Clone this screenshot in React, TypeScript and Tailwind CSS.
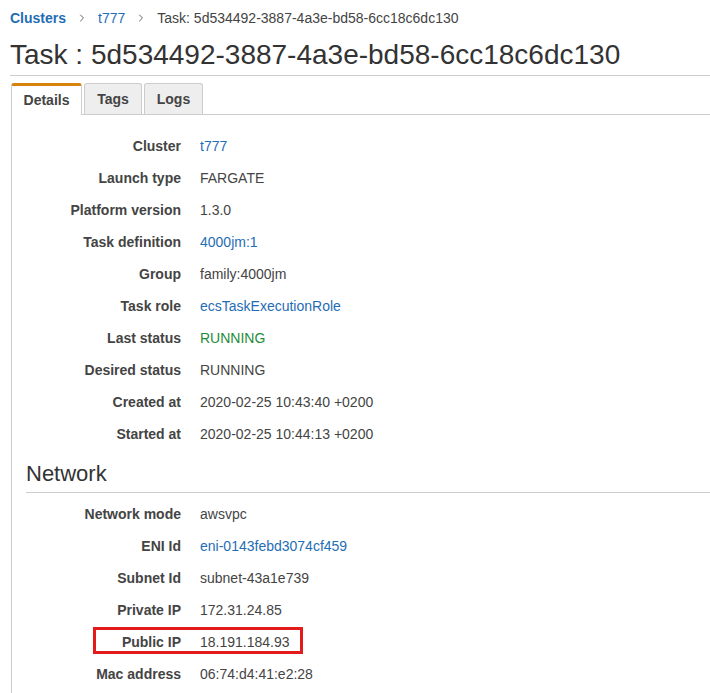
import { ChevronRight } from 'lucide-react'

type Row = {
  label: string
  value: string
  kind?: 'link' | 'ok'
  highlight?: boolean
}

const details: Row[] = [
  { label: 'Cluster', value: 't777', kind: 'link' },
  { label: 'Launch type', value: 'FARGATE' },
  { label: 'Platform version', value: '1.3.0' },
  { label: 'Task definition', value: '4000jm:1', kind: 'link' },
  { label: 'Group', value: 'family:4000jm' },
  { label: 'Task role', value: 'ecsTaskExecutionRole', kind: 'link' },
  { label: 'Last status', value: 'RUNNING', kind: 'ok' },
  { label: 'Desired status', value: 'RUNNING' },
  { label: 'Created at', value: '2020-02-25 10:43:40 +0200' },
  { label: 'Started at', value: '2020-02-25 10:44:13 +0200' },
]

const network: Row[] = [
  { label: 'Network mode', value: 'awsvpc' },
  { label: 'ENI Id', value: 'eni-0143febd3074cf459', kind: 'link' },
  { label: 'Subnet Id', value: 'subnet-43a1e739' },
  { label: 'Private IP', value: '172.31.24.85' },
  { label: 'Public IP', value: '18.191.184.93', highlight: true },
  { label: 'Mac address', value: '06:74:d4:41:e2:28' },
]

function DetailRow({ row }: { row: Row }) {
  const valueClass =
    row.kind === 'link'
      ? 'text-[#1f6db5]'
      : row.kind === 'ok'
        ? 'text-[#1d8d3a]'
        : 'text-[#444]'

  return (
    <div className="flex h-8 items-center">
      <div className="w-[155px] shrink-0 text-right font-bold text-[#444]">{row.label}</div>
      <div className={`pl-[19px] ${valueClass}`}>{row.value}</div>
    </div>
  )
}

function Tab({ label, active, width }: { label: string; active?: boolean; width: string }) {
  if (active) {
    return (
      <div
        className={`relative -mb-px flex h-8 items-center justify-center rounded-t-[3px] border-x border-t-[3px] border-x-[#ccc] border-t-[#d9830f] bg-white pb-[2px] font-bold text-[#444] ${width}`}
      >
        {label}
      </div>
    )
  }
  return (
    <div
      className={`flex h-[31px] items-center justify-center rounded-t-[3px] border border-b-0 border-[#ccc] bg-[#eee] font-bold text-[#444] ${width}`}
    >
      {label}
    </div>
  )
}

export default function App() {
  return (
    <div className="min-h-[693px] bg-white text-sm text-[#444] [font-family:'Liberation_Sans',Arial,sans-serif]">
      {/* Breadcrumb */}
      <nav className="flex h-[34px] items-center pl-[10px] pt-px">
        <a className="font-bold text-[#1f6db5]">Clusters</a>
        <ChevronRight className="mx-[10px] h-3 w-3 text-[#666]" strokeWidth={2} />
        <a className="text-[#1f6db5]">t777</a>
        <ChevronRight className="mx-[10px] h-3 w-3 text-[#666]" strokeWidth={2} />
        <span className="text-[#444]">Task: 5d534492-3887-4a3e-bd58-6cc18c6dc130</span>
      </nav>

      <h1 className="ml-[10px] flex h-[42px] items-center border-b border-[#ccc] text-[28px] leading-8 text-[#333]">
        Task : 5d534492-3887-4a3e-bd58-6cc18c6dc130
      </h1>

      {/* Tabs */}
      <div className="ml-[11px] mt-[7px] flex items-end gap-[2px] border-b border-[#ccc]">
        <Tab label="Details" active width="w-[71px]" />
        <Tab label="Tags" width="w-[58px]" />
        <Tab label="Logs" width="w-[59px]" />
      </div>

      {/* Panel */}
      <div className="ml-[11px] border-l border-[#ccc] pb-4 pl-[14px] pt-[15px]">
        {details.map((row) => (
          <DetailRow key={row.label} row={row} />
        ))}

        <h2 className="mt-[11px] border-b border-[#ccc] pb-[5px] text-[22px] leading-[26px] text-[#333]">
          Network
        </h2>

        <div className="mt-[5px]">
          {network.map((row) =>
            row.highlight ? (
              <div key={row.label} className="relative">
                <div className="pointer-events-none absolute left-[67px] top-[1px] h-[27px] w-[210px] border-[3px] border-[#e31b1b]" />
                <DetailRow row={row} />
              </div>
            ) : (
              <DetailRow key={row.label} row={row} />
            ),
          )}
        </div>
      </div>
    </div>
  )
}
